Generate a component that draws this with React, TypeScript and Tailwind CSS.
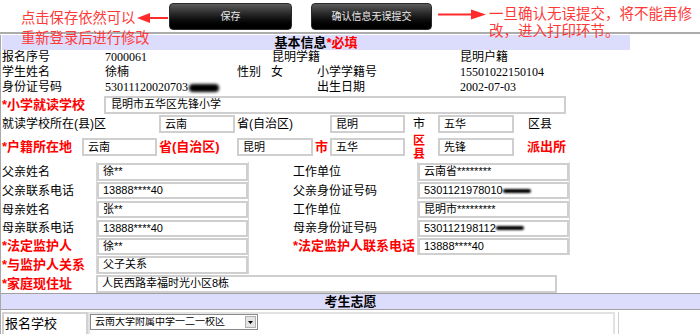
import React from "react";

function Field({ className, children }: { className: string; children?: React.ReactNode }) {
  return (
    <div
      className={
        "shrink-0 flex items-center border-2 border-[#cfcfcf] bg-white pl-[4px] text-[11px] leading-none whitespace-nowrap overflow-hidden " +
        className
      }
    >
      {children}
    </div>
  );
}

function Cell({ className, children }: { className: string; children?: React.ReactNode }) {
  return (
    <div className={"shrink-0 h-full flex items-center border-x border-[#d6d6d6] " + className}>{children}</div>
  );
}

const RED = "text-[13px] font-bold text-[#ff0000] whitespace-nowrap";

function Blob({ className }: { className: string }) {
  return <span className={"inline-block bg-black rounded-full " + className} />;
}

export default function App() {
  return (
    <div className="relative w-[700px] h-[334px] overflow-hidden bg-white text-black font-['Liberation_Sans','Noto_Sans_CJK_SC',sans-serif]">
      {/* top bar */}
      <div className="h-[32px] flex items-start pt-[3px] pl-[169px] gap-[19px]">
        <div className="w-[123px] h-[27px] rounded-[4px] border border-[#2a2a2a] bg-linear-to-b from-[#5c5c5c] via-[#1c1c1c] to-[#000000] text-[#e8e8e8] text-[10px] flex items-center justify-center">
          保存
        </div>
        <div className="w-[121px] h-[27px] rounded-[4px] border border-[#2a2a2a] bg-linear-to-b from-[#5c5c5c] via-[#1c1c1c] to-[#000000] text-[#e8e8e8] text-[10px] flex items-center justify-center">
          确认信息无误提交
        </div>
      </div>
      <div className="h-[2px] bg-[#acacac]" />

      {/* body */}
      <div className="border-l border-[#a9a9a9] h-[300px]">
        <div className="pl-[1px]">
          <div className="mt-[1px] w-[628px] h-[15px] bg-[#dcdcfc] flex items-center justify-center text-[13px] font-bold leading-[15px]">
            基本信息<span className="text-[#ff0000]">*必填</span>
          </div>

          {/* row 1 */}
          <div className="flex h-[15px] items-center text-[12px] leading-[15px] whitespace-nowrap">
            <div className="w-[103px] shrink-0">报名序号</div>
            <div className="w-[167px] shrink-0 font-['Liberation_Serif',serif]">7000061</div>
            <div className="w-[188px] shrink-0">昆明学籍</div>
            <div>昆明户籍</div>
          </div>
          {/* row 2 */}
          <div className="flex h-[15px] items-center text-[12px] leading-[15px] whitespace-nowrap">
            <div className="w-[103px] shrink-0">学生姓名</div>
            <div className="w-[132px] shrink-0">徐楠</div>
            <div className="w-[34px] shrink-0">性别</div>
            <div className="w-[46px] shrink-0">女</div>
            <div className="w-[143px] shrink-0">小学学籍号</div>
            <div className="font-['Liberation_Serif',serif]">15501022150104</div>
          </div>
          {/* row 3 */}
          <div className="flex h-[15px] items-center text-[12px] leading-[15px] whitespace-nowrap">
            <div className="w-[103px] shrink-0">身份证号码</div>
            <div className="w-[212px] shrink-0 flex items-center font-['Liberation_Serif',serif]">
              53011120020703
              <Blob className="w-[30px] h-[8px] blur-[1.5px] ml-[1px]" />
            </div>
            <div className="w-[143px] shrink-0">出生日期</div>
            <div className="font-['Liberation_Serif',serif]">2002-07-03</div>
          </div>

          {/* 小学就读学校 */}
          <div className="flex h-[19px] items-center">
            <div className={"w-[102px] shrink-0 leading-[18px] " + RED}>*小学就读学校</div>
            <Field className="w-[462px] h-[18px] pl-[5px]">昆明市五华区先锋小学</Field>
          </div>

          {/* 就读学校所在(县)区 */}
          <div className="flex h-[21px] items-start pt-[1px] text-[12px] leading-[18px] whitespace-nowrap">
            <div className="w-[157px] shrink-0">就读学校所在(县)区</div>
            <Field className="w-[76px] h-[18px]">云南</Field>
            <div className="w-[95px] shrink-0 pl-[2px]">省(自治区)</div>
            <Field className="w-[75px] h-[18px]">昆明</Field>
            <div className="w-[33px] shrink-0 pl-[8px]">市</div>
            <Field className="w-[76px] h-[18px]">五华</Field>
            <div className="pl-[14px]">区县</div>
          </div>

          {/* 户籍所在地 */}
          <div className="flex h-[27px] items-start pt-[3px] leading-[18px]">
            <div className={"w-[80px] shrink-0 " + RED}>*户籍所在地</div>
            <Field className="w-[75px] h-[18px]">云南</Field>
            <div className={"w-[80px] shrink-0 pl-[2px] " + RED}>省(自治区)</div>
            <Field className="w-[76px] h-[18px]">昆明</Field>
            <div className={"w-[17px] shrink-0 pl-[2px] " + RED}>市</div>
            <Field className="w-[75px] h-[18px]">五华</Field>
            <div className="w-[33px] shrink-0 pl-[8px] -mt-[3px] flex flex-col text-[12px] font-bold text-[#ff0000] leading-[12.5px]">
              <span>区</span>
              <span>县</span>
            </div>
            <Field className="w-[76px] h-[18px]">先锋</Field>
            <div className={"pl-[13px] " + RED}>派出所</div>
          </div>

          {/* parents */}
          <div className="flex h-[19px] items-center text-[12px] whitespace-nowrap">
            <div className="w-[94px] shrink-0">父亲姓名</div>
            <Cell className="w-[153px]"><Field className="w-full h-[18px]">徐**</Field></Cell>
            <div className="w-[44px] shrink-0" />
            <div className="w-[124px] shrink-0">工作单位</div>
            <Cell className="w-[153px]"><Field className="w-full h-[18px]">云南省********</Field></Cell>
          </div>
          <div className="flex h-[19px] items-center text-[12px] whitespace-nowrap">
            <div className="w-[94px] shrink-0">父亲联系电话</div>
            <Cell className="w-[153px]"><Field className="w-full h-[17px] text-[10px]">13888****40</Field></Cell>
            <div className="w-[44px] shrink-0" />
            <div className="w-[124px] shrink-0">父亲身份证号码</div>
            <Cell className="w-[153px]">
              <Field className="w-full h-[17px] text-[10px]">
                5301121978010
                <Blob className="w-[28px] h-[4px] blur-[0.8px]" />
              </Field>
            </Cell>
          </div>
          <div className="flex h-[19px] items-center text-[12px] whitespace-nowrap">
            <div className="w-[94px] shrink-0">母亲姓名</div>
            <Cell className="w-[153px]"><Field className="w-full h-[17px]">张**</Field></Cell>
            <div className="w-[44px] shrink-0" />
            <div className="w-[124px] shrink-0">工作单位</div>
            <Cell className="w-[153px]"><Field className="w-full h-[17px]">昆明市*********</Field></Cell>
          </div>
          <div className="flex h-[18px] items-center text-[12px] whitespace-nowrap">
            <div className="w-[94px] shrink-0">母亲联系电话</div>
            <Cell className="w-[153px]"><Field className="w-full h-[17px] text-[10px]">13888****40</Field></Cell>
            <div className="w-[44px] shrink-0" />
            <div className="w-[124px] shrink-0">母亲身份证号码</div>
            <Cell className="w-[153px]">
              <Field className="w-full h-[17px] text-[10px]">
                530112198112
                <Blob className="w-[28px] h-[4px] blur-[0.8px]" />
              </Field>
            </Cell>
          </div>
          <div className="flex h-[18px] items-center whitespace-nowrap">
            <div className={"w-[94px] shrink-0 " + RED}>*法定监护人</div>
            <Cell className="w-[153px]"><Field className="w-full h-[17px]">徐**</Field></Cell>
            <div className="w-[44px] shrink-0" />
            <div className={"w-[124px] shrink-0 " + RED}>*法定监护人联系电话</div>
            <Cell className="w-[153px]"><Field className="w-full h-[17px] text-[10px]">13888****40</Field></Cell>
          </div>
          <div className="flex h-[19px] items-center whitespace-nowrap">
            <div className={"w-[94px] shrink-0 " + RED}>*与监护人关系</div>
            <Cell className="w-[153px]"><Field className="w-full h-[18px]">父子关系</Field></Cell>
          </div>
          <div className="flex h-[19px] items-center whitespace-nowrap">
            <div className={"w-[94px] shrink-0 " + RED}>*家庭现住址</div>
            <Field className="w-[461px] h-[18px]">人民西路幸福时光小区8栋</Field>
          </div>
        </div>

        {/* 考生志愿 band */}
        <div className="h-[17px] border-y border-[#a0a0a0] bg-[#dcdcfc] flex items-center justify-center text-[13px] font-bold leading-[15px]">
          考生志愿
        </div>

        {/* 报名学校 row */}
        <div className="flex items-start pt-[2px] h-[24px]">
          <div className="ml-[1px] w-[86px] h-[26px] shrink-0 border-2 border-[#d2d2d2] text-[13px] leading-[20px] pl-[1px] whitespace-nowrap">
            报名学校
          </div>
          <div className="w-[527px] h-[26px] shrink-0 border-2 border-[#e2e2e2]">
            <div className="w-[168px] h-[16px] border border-[#8a8a8a] bg-white flex items-center">
              <div className="flex-1 pl-[4px] text-[10px] leading-none whitespace-nowrap overflow-hidden">
                云南大学附属中学一二一校区
              </div>
              <div className="w-[11px] h-[12px] mr-[1px] bg-[#e4e4e4] border border-[#b0b0b0] flex items-center justify-center">
                <svg width="5" height="3" viewBox="0 0 5 3">
                  <polygon points="0,0 5,0 2.5,3" fill="#000" />
                </svg>
              </div>
            </div>
          </div>
          <div className="ml-[3px] w-[1px] h-[26px] bg-[#cfcfcf]" />
        </div>
      </div>

      {/* annotations */}
      <div className="absolute left-[21px] top-[9px] text-[14.3px] leading-[19.5px] text-[#ff3838] whitespace-nowrap">
        点击保存依然可以
        <br />
        重新登录后进行修改
      </div>
      <div className="absolute left-[489px] top-[6px] text-[14.5px] leading-[17px] text-[#ff3838] whitespace-nowrap">
        一旦确认无误提交，将不能再修
        <br />
        改，进入打印环节。
      </div>
      <svg className="absolute left-[135px] top-[11px]" width="34" height="14" viewBox="0 0 34 14">
        <line x1="12" y1="7" x2="33" y2="7" stroke="#ff2a2a" strokeWidth="2" />
        <polygon points="2,7 15,2 15,12" fill="#ff2a2a" />
      </svg>
      <svg className="absolute left-[436px] top-[8px]" width="52" height="14" viewBox="0 0 52 14">
        <line x1="2" y1="6.5" x2="38" y2="6.5" stroke="#ff2a2a" strokeWidth="2" />
        <polygon points="50,6.5 35,1.5 35,11.5" fill="#ff2a2a" />
      </svg>
    </div>
  );
}
